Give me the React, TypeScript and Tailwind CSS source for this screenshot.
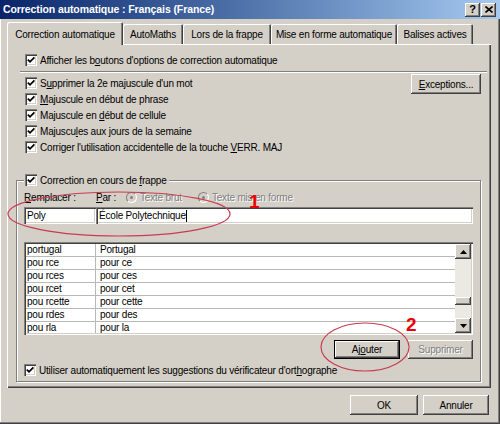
import React from "react";

const raised =
  "shadow-[inset_-1px_-1px_0_#404040,inset_1px_1px_0_#ffffff,inset_-2px_-2px_0_#808080,inset_2px_2px_0_#d4d0c8]";
const sunken =
  "shadow-[inset_1px_1px_0_#808080,inset_2px_2px_0_#404040,inset_-1px_-1px_0_#ffffff,inset_-2px_-2px_0_#d4d0c8]";
const disabledText = "text-[#808080] [text-shadow:1px_1px_0_#ffffff]";

function Check() {
  return (
    <span className={`w-[12px] h-[12px] bg-white shrink-0 flex items-center justify-center ${sunken}`}>
      <svg width="8" height="8" viewBox="0 0 8 8">
        <polyline points="0.8,3.6 3,5.8 7.4,1.4" fill="none" stroke="#000" strokeWidth="1.8" />
      </svg>
    </span>
  );
}

function Radio() {
  return (
    <span className="w-[11px] h-[11px] rounded-full bg-[#d4d0c8] border border-[#808080] border-r-white border-b-white flex items-center justify-center shrink-0">
      <span className="w-[3px] h-[3px] rounded-full bg-[#808080]" />
    </span>
  );
}

function CheckRow({ children }: { children: React.ReactNode }) {
  return (
    <div className="h-[16px] flex items-center gap-[3px] whitespace-nowrap">
      <Check />
      <span>{children}</span>
    </div>
  );
}

const rows = [
  ["portugal", "Portugal"],
  ["pou rce", "pour ce"],
  ["pou rces", "pour ces"],
  ["pou rcet", "pour cet"],
  ["pou rcette", "pour cette"],
  ["pou rdes", "pour des"],
  ["pou rla", "pour la"],
];

const tabs = [
  { label: "AutoMaths", w: "w-[60px]" },
  { label: "Lors de la frappe", w: "w-[88px]" },
  { label: "Mise en forme automatique", w: "w-[126px]" },
  { label: "Balises actives", w: "w-[76px]" },
];

export default function App() {
  return (
    <div className="relative w-[500px] h-[424px] overflow-hidden bg-[#d4d0c8] font-['Liberation_Sans',Arial,sans-serif] text-[10px] tracking-[-0.2px] text-black shadow-[inset_-1px_-1px_0_#404040,inset_-2px_-2px_0_#808080,inset_1px_1px_0_#ffffff]">
      {/* title bar */}
      <div className="h-[19px] flex items-center justify-between pl-[3px] pr-[4px] bg-linear-to-r from-[#0a246a] to-[#a6caf0]">
        <span className="text-white font-bold text-[10.5px] tracking-[-0.1px]">Correction automatique : Français (France)</span>
        <div className="flex gap-[1px]">
          <span className={`w-[15px] h-[14px] bg-[#d4d0c8] flex items-center justify-center font-bold text-[11px] leading-none ${raised}`}>?</span>
          <span className={`w-[15px] h-[14px] bg-[#d4d0c8] flex items-center justify-center ${raised}`}>
            <svg width="8" height="7" viewBox="0 0 8 7">
              <path d="M0.5 0.5 L7.5 6.5 M7.5 0.5 L0.5 6.5" stroke="#000" strokeWidth="1.6" />
            </svg>
          </span>
        </div>
      </div>

      {/* tabs */}
      <div className="mt-[3px] ml-[7px] h-[22px] flex items-end whitespace-nowrap">
        <div className="relative z-10 w-[116px] h-[23px] -mb-[1px] bg-[#d4d0c8] rounded-t-[2px] shadow-[inset_1px_1px_0_#ffffff,inset_-1px_0_0_#404040,inset_-2px_0_0_#808080] flex items-start justify-center pt-[5px]">
          Correction automatique
        </div>
        {tabs.map((t) => (
          <div
            key={t.label}
            className={`${t.w} h-[20px] rounded-t-[2px] shadow-[inset_1px_1px_0_#ffffff,inset_-1px_0_0_#404040,inset_-2px_0_0_#808080] flex items-center justify-center`}
          >
            {t.label}
          </div>
        ))}
      </div>

      {/* panel */}
      <div className="ml-[7px] w-[484px] h-[344px] shadow-[inset_1px_1px_0_#ffffff,inset_-1px_-1px_0_#404040,inset_-2px_-2px_0_#808080] flex flex-col">
        <div className="mt-[8px] ml-[18px]">
          <CheckRow>
            Afficher les b<u>o</u>utons d'options de correction automatique
          </CheckRow>
        </div>
        <div className="mt-[3px] ml-[13px] mr-[4px] h-[2px] border-t border-[#808080] border-b border-b-white" />

        <div className="mt-[2px] ml-[18px] mr-[10px] flex justify-between">
          <div className="flex flex-col">
            <CheckRow>
              S<u>u</u>pprimer la 2e majuscule d'un mot
            </CheckRow>
            <CheckRow>
              <u>M</u>ajuscule en début de phrase
            </CheckRow>
            <CheckRow>
              Majuscule en <u>d</u>ébut de cellule
            </CheckRow>
            <CheckRow>
              Majuscu<u>l</u>es aux jours de la semaine
            </CheckRow>
            <CheckRow>
              Corriger l'utilisation accidentelle de la touche <u>V</u>ERR. MAJ
            </CheckRow>
          </div>
          <button className={`-mt-[1px] w-[70px] h-[20px] bg-[#d4d0c8] ${raised}`}>
            <u>E</u>xceptions...
          </button>
        </div>

        {/* group box */}
        <fieldset className="mt-[18px] ml-[9px] w-[465px] border border-[#808080] shadow-[inset_1px_1px_0_#ffffff,1px_1px_0_#ffffff] pl-[7px] pr-[7px] pb-[3px]">
          <legend className="pl-[1px] pr-[2px] bg-[#d4d0c8]">
            <div className="h-[14px] flex items-center gap-[3px] whitespace-nowrap">
              <Check />
              <span>
                Correction en cours de <u>f</u>rappe
              </span>
            </div>
          </legend>

          <div className="mt-[3px] h-[14px] flex items-center whitespace-nowrap">
            <span className="w-[72px]">
              <u>R</u>emplacer :
            </span>
            <span className="w-[30px]">
              <u>P</u>ar :
            </span>
            <span className="flex items-center gap-[3px]">
              <Radio />
              <span className={disabledText}>Texte brut</span>
            </span>
            <span className="ml-[16px] flex items-center gap-[3px]">
              <Radio />
              <span className={disabledText}>Texte mis en forme</span>
            </span>
          </div>

          <div className="mt-[3px] flex">
            <div className={`w-[72px] h-[17px] bg-white pl-[3px] flex items-center ${sunken}`}>Poly</div>
            <div className={`w-[377px] h-[17px] bg-white pl-[3px] flex items-center ${sunken}`}>
              École Polytechnique<span className="w-px h-[12px] bg-black" />
            </div>
          </div>

          <div className={`mt-[18px] w-[449px] h-[93px] bg-white p-[2px] flex ${sunken}`}>
            <div className="flex-1 overflow-hidden">
              {rows.map(([a, b]) => (
                <div key={a} className="h-[13px] flex border-b border-[#b8b8b8] leading-[12px]">
                  <span className="w-[70px] border-r border-[#b8b8b8] pl-[1px]">{a}</span>
                  <span className="pl-[4px]">{b}</span>
                </div>
              ))}
            </div>
            <div className="w-[16px] bg-[#ece9e2] flex flex-col">
              <span className={`h-[15px] bg-[#d4d0c8] flex items-center justify-center ${raised}`}>
                <svg width="7" height="4" viewBox="0 0 7 4">
                  <path d="M3.5 0 L7 4 L0 4 Z" fill="#000" />
                </svg>
              </span>
              <div className="flex-1 flex flex-col justify-end pb-[13px]">
                <span className={`h-[8px] bg-[#d4d0c8] ${raised}`} />
              </div>
              <span className={`h-[15px] bg-[#d4d0c8] flex items-center justify-center ${raised}`}>
                <svg width="7" height="4" viewBox="0 0 7 4">
                  <path d="M0 0 L7 0 L3.5 4 Z" fill="#000" />
                </svg>
              </span>
            </div>
          </div>

          <div className="mt-[5px] flex justify-end gap-[8px]">
            <button className="w-[66px] h-[19px] border border-black bg-[#d4d0c8] shadow-[inset_-1px_-1px_0_#404040,inset_1px_1px_0_#ffffff,inset_-2px_-2px_0_#808080]">
              Aj<u>o</u>uter
            </button>
            <button className={`w-[65px] h-[19px] bg-[#d4d0c8] ${raised} ${disabledText}`}>Supprimer</button>
          </div>

          <div className="mt-[3px]">
            <CheckRow>
              Utiliser automatiquement les suggestions du vérificateur d'ort<u>h</u>ographe
            </CheckRow>
          </div>
        </fieldset>
      </div>

      {/* dialog buttons */}
      <div className="mt-[7px] mr-[11px] flex justify-end gap-[5px]">
        <button className={`w-[68px] h-[20px] bg-[#d4d0c8] ${raised}`}>OK</button>
        <button className={`w-[66px] h-[20px] bg-[#d4d0c8] ${raised}`}>Annuler</button>
      </div>

      {/* annotations */}
      <svg className="absolute inset-0 pointer-events-none" width="500" height="424" viewBox="0 0 500 424">
        <ellipse cx="119" cy="214" rx="111" ry="22" fill="none" stroke="#c83c50" strokeWidth="1.2" />
        <ellipse cx="365" cy="347" rx="44" ry="24" fill="none" stroke="#c83c50" strokeWidth="1.2" />
      </svg>
      <span className="absolute left-[249px] top-[192px] text-[19px] font-bold text-[#e80000] leading-none">1</span>
      <span className="absolute left-[406px] top-[315px] text-[19px] font-bold text-[#e80000] leading-none">2</span>
    </div>
  );
}
